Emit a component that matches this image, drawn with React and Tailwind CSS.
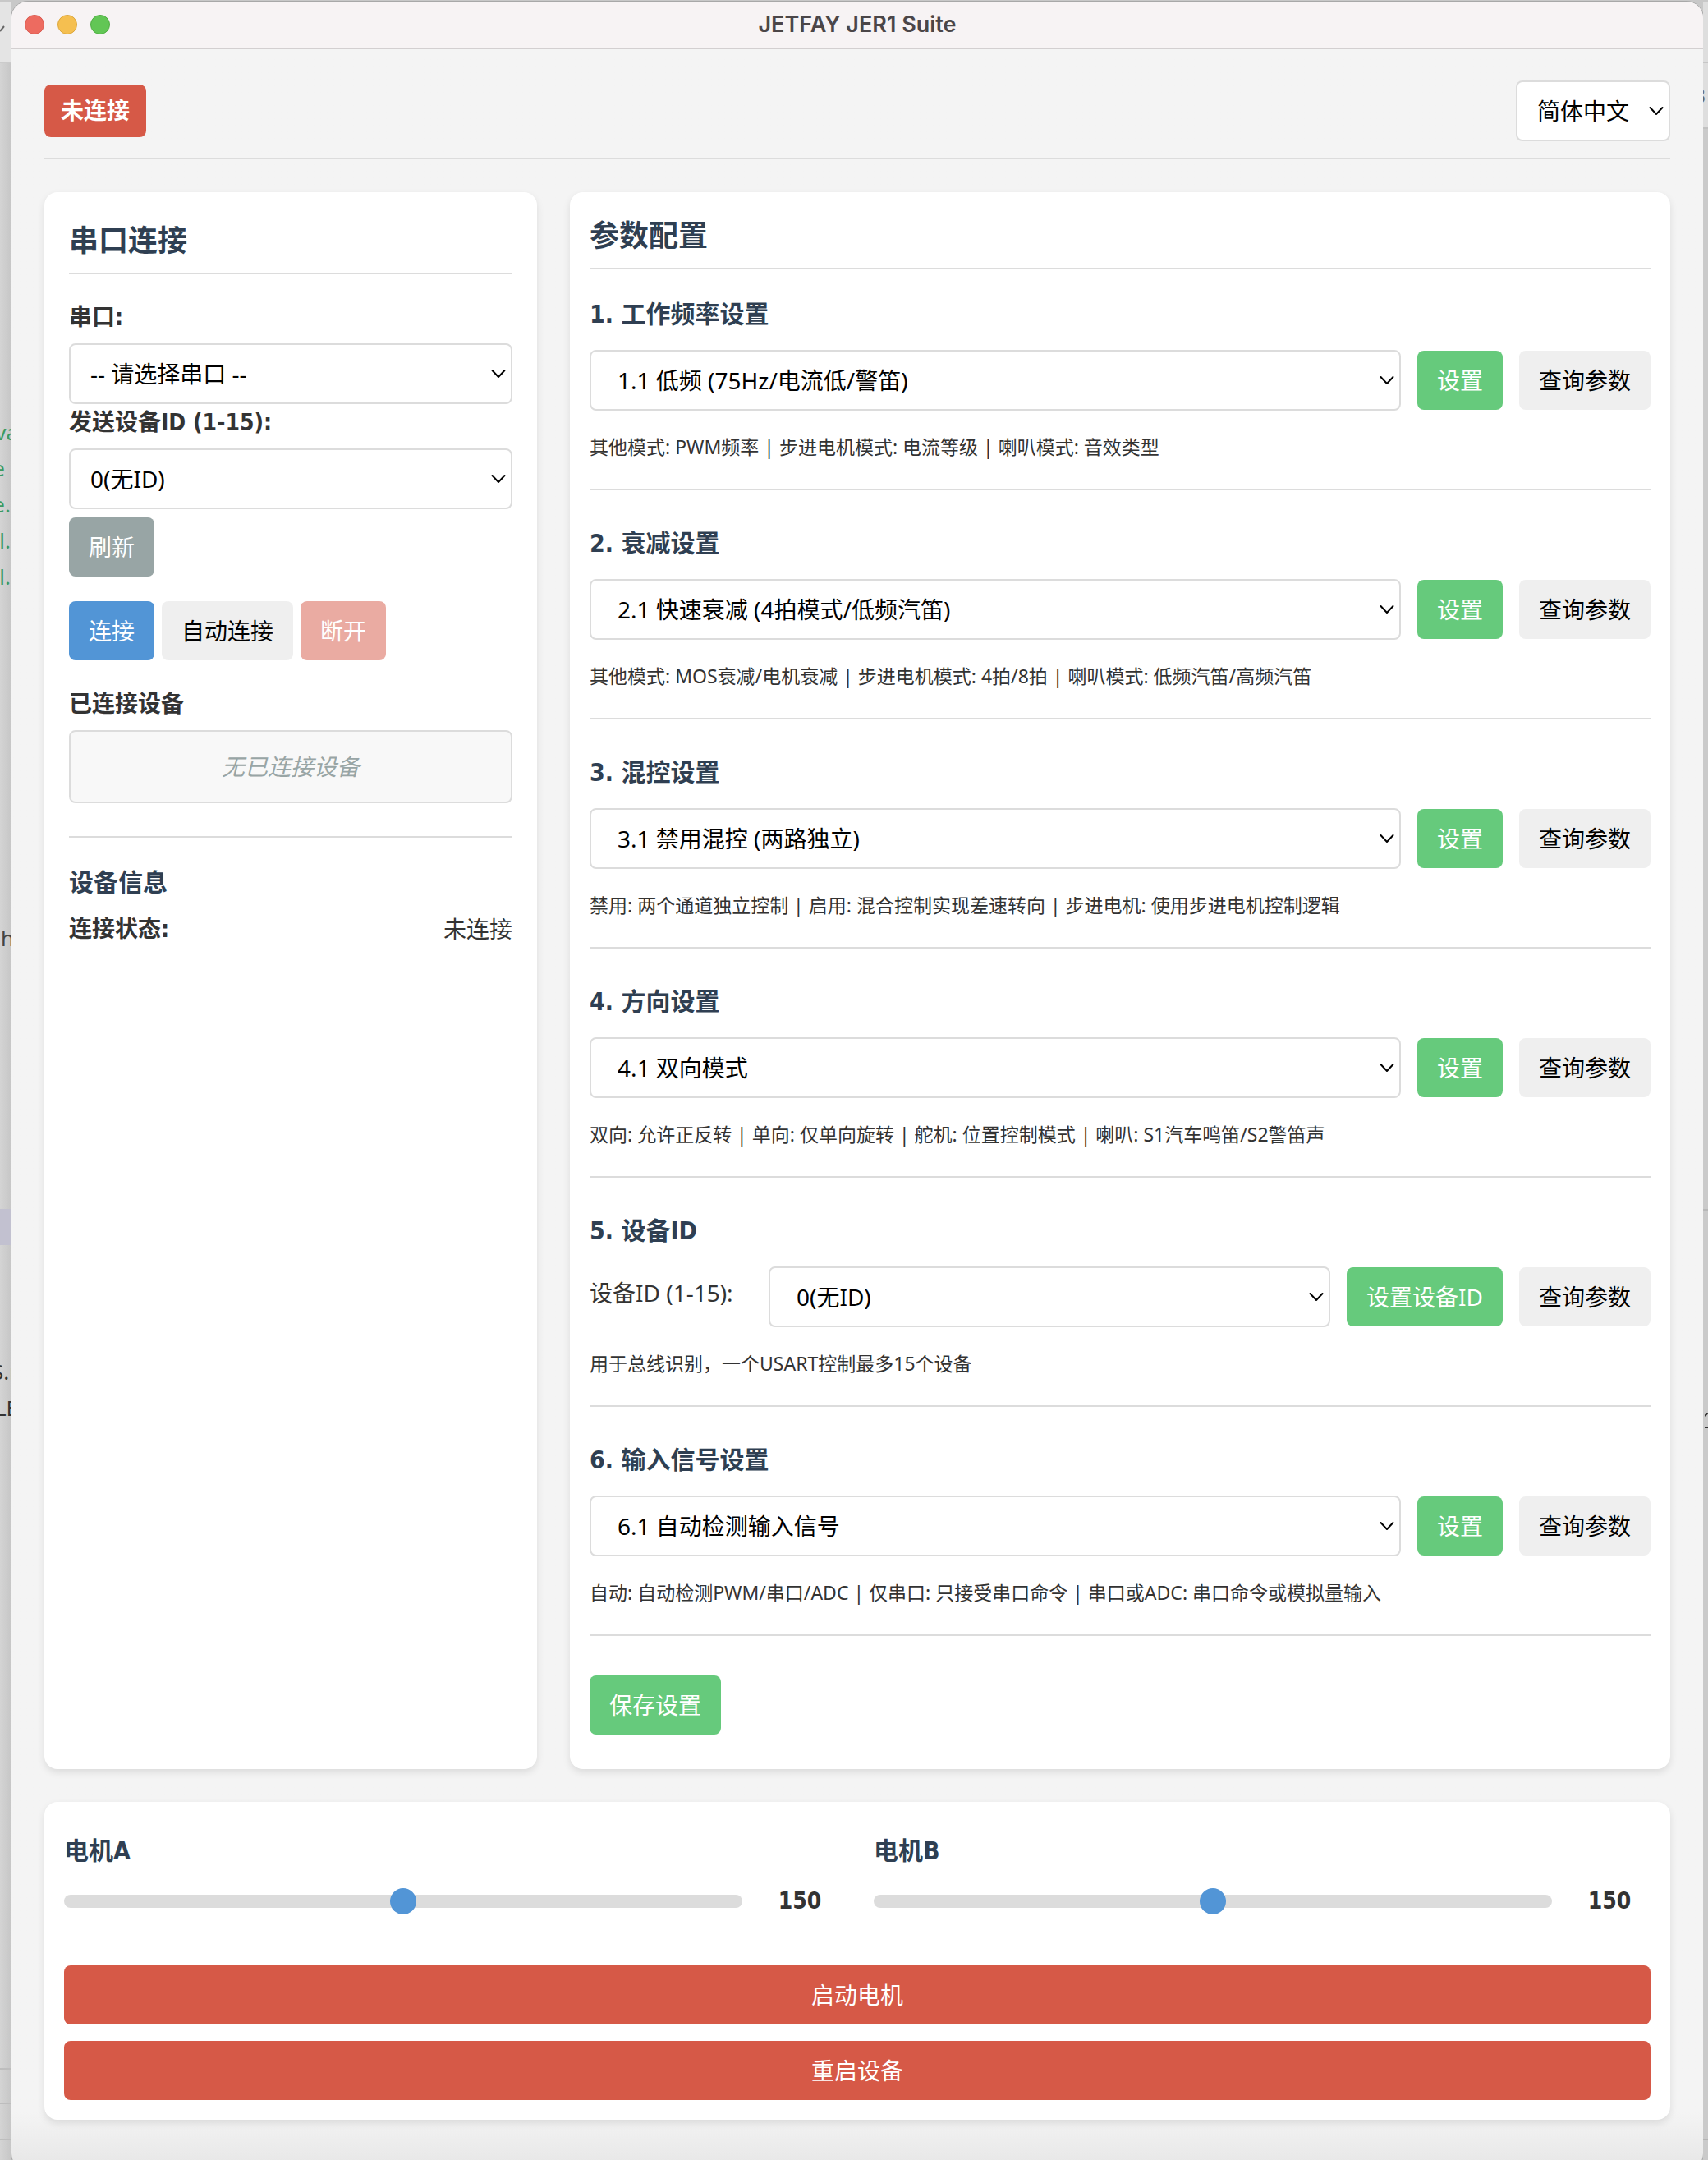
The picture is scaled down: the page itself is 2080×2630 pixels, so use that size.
import { useState } from 'react'
import clsx from 'clsx'

const DEVICE_IDS = ['0(无ID)', ...Array.from({ length: 15 }, (_, i) => `${i + 1}`)]

const SECTIONS = [
  {
    id: 'freq',
    title: '1. 工作频率设置',
    options: ['1.1 低频 (75Hz/电流低/警笛)'],
    hint: '其他模式: PWM频率 | 步进电机模式: 电流等级 | 喇叭模式: 音效类型'
  },
  {
    id: 'decay',
    title: '2. 衰减设置',
    options: ['2.1 快速衰减 (4拍模式/低频汽笛)'],
    hint: '其他模式: MOS衰减/电机衰减 | 步进电机模式: 4拍/8拍 | 喇叭模式: 低频汽笛/高频汽笛'
  },
  {
    id: 'mix',
    title: '3. 混控设置',
    options: ['3.1 禁用混控 (两路独立)'],
    hint: '禁用: 两个通道独立控制 | 启用: 混合控制实现差速转向 | 步进电机: 使用步进电机控制逻辑'
  },
  {
    id: 'direction',
    title: '4. 方向设置',
    options: ['4.1 双向模式'],
    hint: '双向: 允许正反转 | 单向: 仅单向旋转 | 舵机: 位置控制模式 | 喇叭: S1汽车鸣笛/S2警笛声'
  },
  {
    id: 'device-id',
    title: '5. 设备ID',
    label: '设备ID (1-15):',
    options: DEVICE_IDS,
    action: '设置设备ID',
    hint: '用于总线识别，一个USART控制最多15个设备'
  },
  {
    id: 'input',
    title: '6. 输入信号设置',
    options: ['6.1 自动检测输入信号'],
    hint: '自动: 自动检测PWM/串口/ADC | 仅串口: 只接受串口命令 | 串口或ADC: 串口命令或模拟量输入'
  }
]

const VARIANTS = {
  primary: 'bg-[#5295d6] text-white',
  success: 'bg-[#66ca7c] text-white',
  danger: 'bg-[#d65947] text-white',
  muted: 'bg-[#98a5a5] text-white',
  plain: 'bg-[#efefef] text-black'
}

const BOLD = "font-bold font-['DejaVu_Sans_Condensed','Noto_Sans_CJK_SC',sans-serif]"

const Button = ({ variant = 'plain', className, children, ...rest }) => (
  <button
    type='button'
    className={clsx('h-[72px] px-6 rounded-lg whitespace-nowrap shrink-0 disabled:opacity-50', VARIANTS[variant], className)}
    {...rest}
  >
    {children}
  </button>
)

const Select = ({ options, className, wide, ...rest }) => (
  <div className={clsx('relative', className)}>
    <select
      className={clsx(
        'block w-full h-[74px] pr-10 appearance-none rounded-lg border-2 border-[#dcdcdc] bg-white text-black',
        wide ? 'pl-8' : 'pl-6'
      )}
      {...rest}
    >
      {options.map(o => <option key={o}>{o}</option>)}
    </select>
    <svg className='absolute right-2 top-1/2 -translate-y-1/2 w-[18px] h-3 pointer-events-none' viewBox='0 0 18 12' fill='none'>
      <path d='M1.5 2 L9 10 L16.5 2' stroke='#000' strokeWidth='2' strokeLinecap='round' strokeLinejoin='round' />
    </svg>
  </div>
)

const Card = ({ className, children }) => (
  <section className={clsx('bg-white rounded-2xl shadow-[0_4px_10px_rgba(0,0,0,0.1)]', className)}>
    {children}
  </section>
)

const CardTitle = ({ children }) => (
  <h2 className={clsx('text-[36px] leading-[60px] text-[#2f3f52] pb-2 border-b-2 border-[#dcdcdc]', BOLD)}>
    {children}
  </h2>
)

const MotorSlider = ({ id, label }) => {
  const [value, setValue] = useState(150)

  return (
    <div className='flex-1'>
      <label htmlFor={id} className={clsx('block pt-3 mb-[14px] text-[30px] leading-[48px] text-[#2f3f52]', BOLD)}>
        {label}
      </label>
      <div className='flex items-center gap-5'>
        <input
          id={id}
          type='range'
          min='0'
          max='300'
          value={value}
          onChange={e => setValue(Number(e.target.value))}
          className='flex-1 h-4 appearance-none rounded-lg bg-[#dcdcdc] [&::-webkit-slider-thumb]:appearance-none [&::-webkit-slider-thumb]:w-8 [&::-webkit-slider-thumb]:h-8 [&::-webkit-slider-thumb]:rounded-full [&::-webkit-slider-thumb]:bg-[#5295d6]'
        />
        <output htmlFor={id} className={clsx('w-[100px] text-center', BOLD)}>{value}</output>
      </div>
    </div>
  )
}

/* Slivers of the editor window that sits behind this one */
const LeftBackdrop = () => (
  <div aria-hidden='true' className="relative w-[14px] shrink-0 overflow-hidden bg-linear-to-r from-[#d4d4d4] to-[#c6c6c6] font-['Noto_Sans'] text-[26px] leading-[44px]">
    <div className='h-[75px] bg-[#e4e4e4] border-b-2 border-[#cbcbcb]' />
    <svg className='absolute left-0 top-[28px] w-[6px] h-[10px]' viewBox='0 0 6 10' fill='none'>
      <path d='M0 8 L5 2' stroke='#666' strokeWidth='2' />
    </svg>
    <div className='absolute top-[502px] right-0 text-right text-[#3c9a5f]'>
      <p className='-mr-2'>va</p>
      <p className='mr-2'>e</p>
      <p className='mr-px'>e.</p>
      <p className='mr-px'>l.</p>
      <p className='mr-px'>l.</p>
    </div>
    <p className='absolute top-[1118px] left-[1px] text-[#444]'>h</p>
    <div className='absolute top-[1470px] w-full h-11 bg-[#c2c1d0]' />
    <div className='absolute top-[1646px] right-0 text-right text-[#333]'>
      <p className='-mr-2'>S.r</p>
      <p className='-mr-2'>LE</p>
    </div>
    <div className='absolute top-[2516px] w-full h-11 border-y-2 border-[#bdbdbd]' />
    <div className='absolute top-[2602px] w-full h-0.5 bg-[#bdbdbd]' />
  </div>
)

const RightBackdrop = () => (
  <div aria-hidden='true' className="relative w-[6px] shrink-0 overflow-hidden bg-[#cacaca] font-['Noto_Sans'] text-[26px] leading-[44px]">
    <div className='h-[155px] bg-[#dedede] border-b-2 border-[#c2c2c2]' />
    <p className='absolute top-[92px] right-[3px] text-[#666]'>3</p>
    <div className='absolute top-[73px] w-full h-0.5 bg-[#c6c6c6]' />
    <div className='absolute top-[1470px] w-full h-0.5 bg-[#b8b8b8]' />
    <svg className='absolute top-[1718px] right-0 w-1 h-5' viewBox='0 0 4 20' fill='none'>
      <path d='M0 4 L4 0 M0 18 H4' stroke='#333' strokeWidth='2' />
    </svg>
    <div className='absolute top-[2602px] w-full h-0.5 bg-[#b4b4b4]' />
  </div>
)

const TitleBar = () => (
  <header className='relative flex items-center h-[58px] px-4 gap-4 bg-[#f7f3f4] border-b-2 border-[#d3cfd0]'>
    <button type='button' aria-label='关闭' className='w-6 h-6 rounded-full bg-[#ed6b60] border border-[#d95a50]' />
    <button type='button' aria-label='最小化' className='w-6 h-6 rounded-full bg-[#f5bf50] border border-[#dba63c]' />
    <button type='button' aria-label='缩放' className='w-6 h-6 rounded-full bg-[#62c655] border border-[#4fad42]' />
    <h1 className="absolute inset-x-0 text-center text-[27px] leading-8 font-semibold text-[#4b4648] pointer-events-none font-['Inter',sans-serif]">
      JETFAY JER1 Suite
    </h1>
  </header>
)

const ConnectionPanel = () => (
  <Card className='w-[600px] shrink-0 p-[30px]'>
    <CardTitle>串口连接</CardTitle>

    <label htmlFor='port' className={clsx('block mt-[30px] mb-[9px]', BOLD)}>串口:</label>
    <Select id='port' options={['-- 请选择串口 --']} />
    <label htmlFor='send-id' className={clsx('block mb-[9px]', BOLD)}>发送设备ID (1-15):</label>
    <Select id='send-id' options={DEVICE_IDS} />
    <Button variant='muted' className='block mt-[10px]'>刷新</Button>

    <div className='flex gap-[9px] mt-[30px]'>
      <Button variant='primary'>连接</Button>
      <Button>自动连接</Button>
      <Button variant='danger' disabled>断开</Button>
    </div>

    <h3 className={clsx('mt-[31px] mb-[9px]', BOLD)}>已连接设备</h3>
    <div className='h-[89px] flex items-center justify-center rounded-lg border-2 border-[#dcdcdc] bg-[#f8f8f8] italic text-[#98a5a5]'>
      无已连接设备
    </div>

    <div className='mt-10 pt-[31px] border-t-2 border-[#dcdcdc]'>
      <h3 className={clsx('mb-[10px] text-[30px] leading-[48px] text-[#2f3f52]', BOLD)}>设备信息</h3>
      <div className='flex justify-between'>
        <span className={BOLD}>连接状态:</span>
        <span>未连接</span>
      </div>
    </div>
  </Card>
)

const ParamSection = ({ id, title, label, options, action = '设置', hint }) => (
  <div className='mb-10 pb-8 border-b-2 border-[#dcdcdc]'>
    <h3 className={clsx('mb-[18px] text-[30px] leading-[50px] text-[#2f3f52]', BOLD)}>{title}</h3>
    <div className='flex items-center gap-5'>
      {label && <label htmlFor={id} className='w-[198px] pb-[10px] shrink-0'>{label}</label>}
      <Select id={id} aria-label={label ? undefined : title} options={options} wide className='flex-1' />
      <Button variant='success'>{action}</Button>
      <Button>查询参数</Button>
    </div>
    <p className='mt-[25px] text-[23px] leading-[38px]'>{hint}</p>
  </div>
)

const App = () => (
  <div className="min-h-screen flex overflow-hidden pt-0.5 bg-[#c8c8c8] text-[28px] leading-[45px] text-[#333] font-['Noto_Sans','Noto_Sans_CJK_SC',sans-serif]">
    <LeftBackdrop />

    <div className='flex-1 min-w-0 -mb-3 flex flex-col rounded-[20px] overflow-hidden bg-[#f4f4f4] outline outline-[#a8a8a8]'>
      <TitleBar />

      <main className='flex-1 px-10 pt-[38px] pb-[61px] bg-linear-to-t from-[#e6e6e6] to-[#f4f4f4] to-[70px]'>
        <div className='flex items-center justify-between pb-5 mb-10 border-b-2 border-[#dcdcdc]'>
          <span className={clsx('h-16 px-5 flex items-center rounded-lg bg-[#d65947] text-white', BOLD)}>未连接</span>
          <Select aria-label='语言' options={['简体中文', 'English']} className='w-[188px]' />
        </div>

        <div className='flex gap-10'>
          <ConnectionPanel />

          <Card className='flex-1 min-w-0 px-6 pt-6 pb-[42px]'>
            <CardTitle>参数配置</CardTitle>
            <div className='pt-[30px] pb-2'>
              {SECTIONS.map(s => <ParamSection key={s.id} {...s} />)}
            </div>
            <Button variant='success' className='block'>保存设置</Button>
          </Card>
        </div>

        <Card className='mt-10 p-6'>
          <div className='flex gap-10 mb-14'>
            <MotorSlider id='motor-a' label='电机A' />
            <MotorSlider id='motor-b' label='电机B' />
          </div>
          <div className='flex flex-col gap-5'>
            <Button variant='danger'>启动电机</Button>
            <Button variant='danger'>重启设备</Button>
          </div>
        </Card>
      </main>
    </div>

    <RightBackdrop />
  </div>
)

export default App
